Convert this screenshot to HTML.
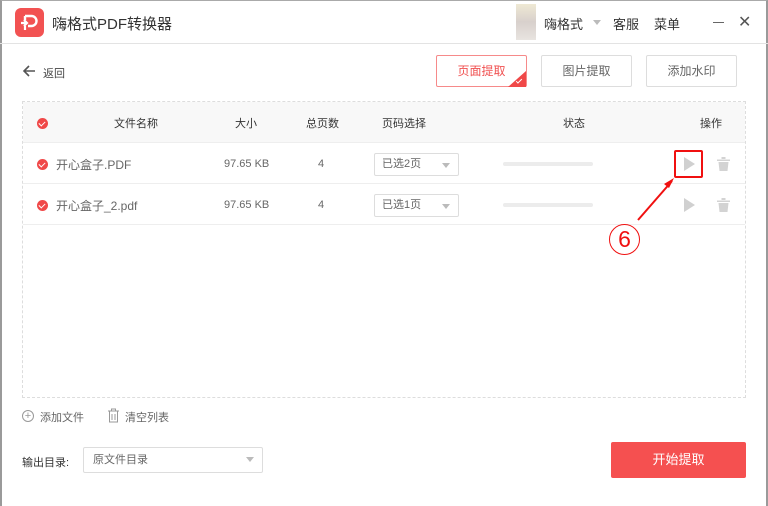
<!DOCTYPE html>
<html><head><meta charset="utf-8"><style>
*{margin:0;padding:0;box-sizing:border-box}
body{width:768px;height:506px;overflow:hidden;background:#fff;font-family:"Liberation Sans","Noto Sans CJK SC",sans-serif;color:#333;position:relative}
.abs{position:absolute}
.frame{left:0;top:0;width:768px;height:506px;border-left:2px solid #9a9a9a;border-right:2px solid #9a9a9a;border-top:1px solid #aaa}
.tb{left:0;top:0;width:768px;height:44px;border-bottom:1px solid #e3e3e3}
.t{font-size:13px;color:#666;white-space:nowrap}
.btn{top:55px;width:91px;height:32px;border:1px solid #ddd;border-radius:2px;font-size:12px;color:#666;text-align:center;line-height:30px}
.table{left:22px;top:101px;width:724px;height:297px;border:1px dashed #ddd}
.hdr{left:23px;top:102px;width:722px;height:41px;background:#f8f8f8;border-bottom:1px solid #eee}
.row{left:23px;width:722px;height:41px;border-bottom:1px solid #eee}
.chk{width:11px;height:11px;border-radius:50%;background:#f04848}
.chk:after{content:"";position:absolute;left:3px;top:2px;width:3px;height:5px;border:solid #fff;border-width:0 1.5px 1.5px 0;transform:rotate(45deg)}
.sel{width:85px;height:23px;border:1px solid #ddd;border-radius:2px;font-size:11px;color:#666;line-height:21px;padding-left:7px}
.sel:after{content:"";position:absolute;right:8px;top:9px;border:4px solid transparent;border-top:5px solid #bbb}
.bar{width:90px;height:4px;background:#ececec;border-radius:2px}
.play{width:0;height:0;border-left:11px solid #d0d0d0;border-top:7px solid transparent;border-bottom:7px solid transparent}
</style></head><body>
<div class="abs frame"></div>
<div class="abs tb"></div>
<div class="abs" style="left:15px;top:8px;width:29px;height:29px;border-radius:6px;background:#f25252"></div>
<svg class="abs" style="left:15px;top:8px" width="29" height="29" viewBox="0 0 29 29"><path d="M10 8h6.5a5 5 0 0 1 0 10H13M10 8v4" fill="none" stroke="#fff" stroke-width="2.4"/><path d="M6 15h6M9 12l3 3-3 3M10 18v4" fill="none" stroke="#fff" stroke-width="2.2"/></svg>
<div class="abs" style="left:52px;top:13px;font-size:15px;color:#333">嗨格式PDF转换器</div>
<div class="abs" style="left:516px;top:4px;width:20px;height:36px;background:linear-gradient(#efe9d4,#d8d0cc 50%,#e8e4e0)"></div>
<div class="abs" style="left:544px;top:14px;font-size:13px;color:#333">嗨格式</div>
<div class="abs" style="left:593px;top:20px;border:4px solid transparent;border-top:5px solid #bbb"></div>
<div class="abs" style="left:613px;top:14px;font-size:13px;color:#333">客服</div>
<div class="abs" style="left:654px;top:14px;font-size:13px;color:#333">菜单</div>
<div class="abs" style="left:713px;top:22px;width:11px;height:1px;background:#666"></div>
<div class="abs" style="left:738px;top:12px;font-size:16px;color:#555">✕</div>
<svg class="abs" style="left:22px;top:64px" width="14" height="14"><path d="M13 7H2M7 2L2 7l5 5" fill="none" stroke="#555" stroke-width="1.6"/></svg>
<div class="abs" style="left:43px;top:65px;font-size:11px;color:#444">返回</div>
<div class="abs btn" style="left:436px;border-color:#f68a8a;color:#f05050">页面提取</div>
<div class="abs" style="left:508px;top:71px;width:0;height:0;border-left:18px solid transparent;border-bottom:16px solid #f04848"></div>
<div class="abs" style="left:516px;top:79px;width:6px;height:3px;border:solid #fff;border-width:0 0 1px 1px;transform:rotate(-45deg)"></div>
<div class="abs btn" style="left:541px">图片提取</div>
<div class="abs btn" style="left:646px">添加水印</div>
<div class="abs table"></div>
<div class="abs hdr"></div>
<div class="abs chk" style="left:37px;top:118px"></div>
<div class="abs t" style="left:114px;top:115px;font-size:11px;color:#333">文件名称</div>
<div class="abs t" style="left:235px;top:115px;font-size:11px;color:#333">大小</div>
<div class="abs t" style="left:306px;top:115px;font-size:11px;color:#333">总页数</div>
<div class="abs t" style="left:382px;top:115px;font-size:11px;color:#333">页码选择</div>
<div class="abs t" style="left:563px;top:115px;font-size:11px;color:#333">状态</div>
<div class="abs t" style="left:700px;top:115px;font-size:11px;color:#333">操作</div>
<div class="abs row" style="top:143px"></div>
<div class="abs row" style="top:184px"></div>
<div class="abs chk" style="left:37px;top:159px"></div>
<div class="abs t" style="left:56px;top:156px;font-size:12px">开心盒子.PDF</div>
<div class="abs t" style="left:224px;top:158px;font-size:11px">97.65 KB</div>
<div class="abs t" style="left:318px;top:158px;font-size:11px">4</div>
<div class="abs sel" style="left:374px;top:153px">已选2页</div>
<div class="abs bar" style="left:503px;top:162px"></div>
<div class="abs play" style="left:684px;top:157px"></div>
<div class="abs" style="left:674px;top:150px;width:29px;height:28px;border:2px solid #f01010;border-radius:2px"></div>
<svg class="abs" style="left:717px;top:157px" width="13" height="14"><path d="M0 2.5h13v1.5H0zM4.5 0h4v2h-4zM1.5 5h10l-1 9h-8z" fill="#d3d3d3"/></svg>
<div class="abs chk" style="left:37px;top:200px"></div>
<div class="abs t" style="left:56px;top:197px;font-size:12px">开心盒子_2.pdf</div>
<div class="abs t" style="left:224px;top:199px;font-size:11px">97.65 KB</div>
<div class="abs t" style="left:318px;top:199px;font-size:11px">4</div>
<div class="abs sel" style="left:374px;top:194px">已选1页</div>
<div class="abs bar" style="left:503px;top:203px"></div>
<div class="abs play" style="left:684px;top:198px"></div>
<svg class="abs" style="left:717px;top:198px" width="13" height="14"><path d="M0 2.5h13v1.5H0zM4.5 0h4v2h-4zM1.5 5h10l-1 9h-8z" fill="#d3d3d3"/></svg>
<svg class="abs" style="left:630px;top:175px" width="50" height="50"><path d="M8 45L42 6" stroke="#f01010" stroke-width="2"/><path d="M44 3L34 9l5 4z" fill="#f01010"/></svg>
<div class="abs" style="left:609px;top:224px;width:31px;height:31px;border:1.5px solid #f01010;border-radius:50%;color:#f01010;font-size:23px;text-align:center;line-height:28px">6</div>
<div class="abs" style="left:22px;top:410px;width:12px;height:12px;border:1px solid #999;border-radius:50%;font-size:11px;line-height:10px;text-align:center;color:#999">+</div>
<div class="abs t" style="left:40px;top:409px;font-size:11px;color:#666">添加文件</div>
<svg class="abs" style="left:107px;top:408px" width="13" height="15"><path d="M1 3h11M4.5 3V1h4v2M2.5 3v11h8V3M5 6v6M8 6v6" fill="none" stroke="#999" stroke-width="1"/></svg>
<div class="abs t" style="left:125px;top:409px;font-size:11px;color:#666">清空列表</div>
<div class="abs t" style="left:22px;top:454px;font-size:11px;color:#333">输出目录:</div>
<div class="abs sel" style="left:83px;top:447px;width:180px;height:26px;line-height:24px;padding-left:9px">原文件目录</div>
<div class="abs" style="left:611px;top:442px;width:135px;height:36px;background:#f55050;border-radius:2px;color:#fff;font-size:13px;text-align:center;line-height:36px">开始提取</div>
</body></html>
